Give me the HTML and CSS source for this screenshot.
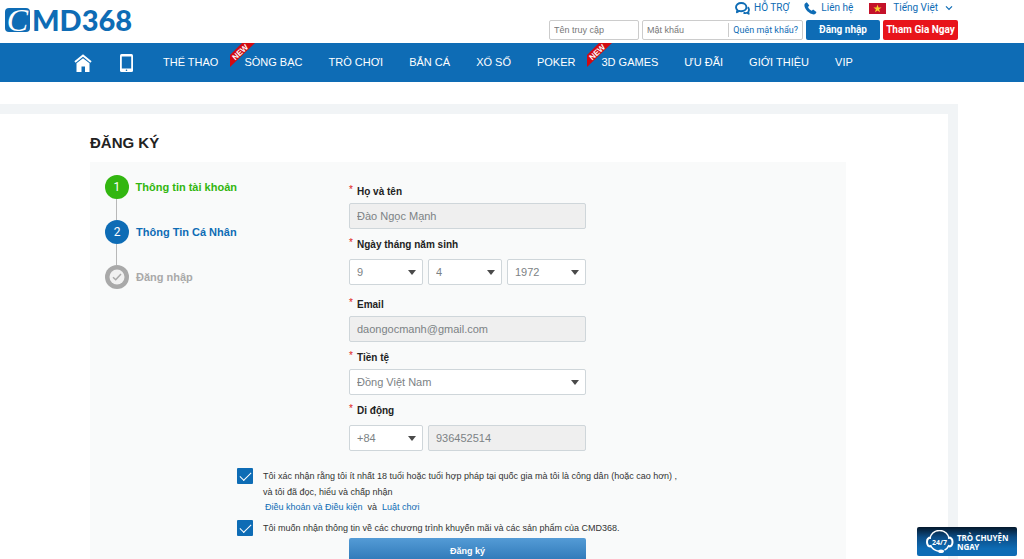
FILE: index.html
```html
<!DOCTYPE html>
<html lang="vi">
<head>
<meta charset="utf-8">
<meta name="viewport" content="width=device-width, initial-scale=1">
<title>CMD368 - Đăng ký</title>
<link rel="stylesheet" href="styles.css">
</head>
<body>
<header class="header">
  <a class="logo" href="#" aria-label="CMD368"><span class="logo-mark">C</span><span class="logo-name">MD368</span></a>
  <div class="header-tools">
    <div class="links">
      <a class="link link-support" href="#">
        <svg width="15" height="13" viewBox="0 0 15 13" aria-hidden="true"><path d="M8.500 10.600c1.200.6 2.600.6 3.400.2l1.800 1-.5-2c1.300-1.400.9-3.600-.6-4.400" fill="none" stroke="#0e6cb5" stroke-width="1.800" stroke-linejoin="round"/><path d="M6.200 1C3.200 1 1 2.900 1 5.200c0 1.100.5 2.100 1.400 2.800l-.5 2.300 2.300-1.400c.6.200 1.300.3 2 .3 3 0 5.200-1.800 5.200-4S9.200 1 6.200 1z" fill="#fff" stroke="#0e6cb5" stroke-width="1.900" stroke-linejoin="round"/></svg>
        HỖ TRỢ</a>
      <a class="link link-contact" href="#">
        <svg width="13" height="13" viewBox="0 0 13 13" aria-hidden="true"><path d="M1 1.600 2.800.300 5.300 3.500 4 4.900c.7 1.600 2 2.900 3.700 3.800l1.400-1.200 3.300 2.400c-.2 1.500-1.400 2.500-2.700 2.500C5.300 12 .400 7 .400 3.200c0-.6.200-1.200.6-1.600z" fill="#0e6cb5"/></svg>
        Liên hệ</a>
      <a class="link link-language" href="#">
        <svg width="17" height="11" viewBox="0 0 17 11" aria-hidden="true"><rect width="17" height="11" fill="#c4122a"/><path d="m8.500 1.500 1 2.900h3.100l-2.500 1.800.9 3-2.500-1.800L6 9.200l.9-3-2.500-1.800h3.100z" fill="#f3d02f"/></svg>
        Tiếng Việt
        <svg width="8" height="6" viewBox="0 0 8 6" aria-hidden="true"><path d="m1 1.300 3 3 3-3" fill="none" stroke="#0e6cb5" stroke-width="1.200"/></svg></a>
    </div>
    <form class="login">
      <input class="login-user" type="text" placeholder="Tên truy cập" aria-label="Tên truy cập">
      <div class="login-pass">
        <input type="password" placeholder="Mật khẩu" aria-label="Mật khẩu">
        <a href="#">Quên mật khẩu?</a>
      </div>
      <button class="btn btn-login" type="button">Đăng nhập</button>
      <button class="btn btn-join" type="button">Tham Gia Ngay</button>
    </form>
  </div>
</header>

<nav class="nav" aria-label="Menu chính">
  <a class="nav-home" href="#" aria-label="Trang chủ"><svg width="18" height="18" viewBox="0 0 18 18" aria-hidden="true"><path d="M1 8 9 1.500 17 8" fill="none" stroke="#fff" stroke-width="2"/><path d="M2.500 9.200 9 4.200l6.500 5V18H11v-5.500H7.500V18h-5z" fill="#fff"/></svg></a>
  <a class="nav-mobile" href="#" aria-label="Di động"><svg width="13" height="18" viewBox="0 0 13 18" aria-hidden="true"><rect width="13" height="18" rx="1.500" fill="#fff"/><path d="M1.800 2.500h9.400v12H1.800z" fill="#0e6cb5"/><circle cx="6.500" cy="16.300" r=".8" fill="#0e6cb5"/></svg></a>
  <a href="#">THỂ THAO</a>
  <a href="#"><svg class="ribbon" width="25" height="24" viewBox="0 0 25 24" aria-hidden="true"><path d="M12 0h13L0 24V12z" fill="#d20a11"/><text class="ribbon-text" transform="translate(10 9) rotate(-43)" text-anchor="middle" y="3">NEW</text></svg>SÒNG BẠC</a>
  <a href="#">TRÒ CHƠI</a>
  <a href="#">BẮN CÁ</a>
  <a href="#">XỔ SỐ</a>
  <a href="#">POKER</a>
  <a href="#"><svg class="ribbon" width="25" height="24" viewBox="0 0 25 24" aria-hidden="true"><path d="M12 0h13L0 24V12z" fill="#d20a11"/><text class="ribbon-text" transform="translate(10 9) rotate(-43)" text-anchor="middle" y="3">NEW</text></svg>3D GAMES</a>
  <a href="#">ƯU ĐÃI</a>
  <a href="#">GIỚI THIỆU</a>
  <a href="#">VIP</a>
</nav>

<main class="page">
  <h1 class="title">ĐĂNG KÝ</h1>
  <div class="panel">
    <ol class="steps">
      <li class="step step-done"><span class="step-dot"><span class="step-number">1</span></span>Thông tin tài khoản</li>
      <li class="step step-current"><span class="step-dot"><span class="step-number">2</span></span>Thông Tin Cá Nhân</li>
      <li class="step step-last"><span class="step-dot"><svg width="16" height="16" viewBox="0 0 16 16" aria-hidden="true"><circle cx="8" cy="8" r="7.500" fill="#f1f1f1"/><path d="m4 8.300 2.700 2.500L12 5" fill="none" stroke="#a9a9a9" stroke-width="1.500"/></svg></span>Đăng nhập</li>
    </ol>
    <form class="register">
      <div class="fields">
        <div class="field">
          <label for="name">Họ và tên</label>
          <input id="name" type="text" value="Đào Ngọc Mạnh" readonly>
        </div>
        <div class="field field-date">
          <label for="day">Ngày tháng năm sinh</label>
          <div class="row">
            <span class="select"><select id="day"><option>9</option></select></span>
            <span class="select"><select aria-label="Tháng"><option>4</option></select></span>
            <span class="select"><select aria-label="Năm"><option>1972</option></select></span>
          </div>
        </div>
        <div class="field">
          <label for="email">Email</label>
          <input id="email" type="email" value="daongocmanh@gmail.com" readonly>
        </div>
        <div class="field">
          <label for="currency">Tiền tệ</label>
          <span class="select"><select id="currency"><option>Đồng Việt Nam</option></select></span>
        </div>
        <div class="field field-phone">
          <label for="phone">Di động</label>
          <div class="row">
            <span class="select"><select aria-label="Mã quốc gia"><option>+84</option></select></span>
            <input id="phone" type="tel" value="936452514" readonly>
          </div>
        </div>
      </div>
      <div class="consents">
        <div class="consent">
          <input id="age" type="checkbox" checked>
          <div>
            <label for="age">Tôi xác nhận rằng tôi ít nhất 18 tuổi hoặc tuổi hợp pháp tại quốc gia mà tôi là công dân (hoặc cao hơn) ,<br>và tôi đã đọc, hiểu và chấp nhận</label>
            <p class="terms"><a href="#">Điều khoản và Điều kiện</a><span>và</span><a href="#">Luật chơi</a></p>
          </div>
        </div>
        <div class="consent">
          <input id="news" type="checkbox" checked>
          <label for="news">Tôi muốn nhận thông tin về các chương trình khuyến mãi và các sản phẩm của CMD368.</label>
        </div>
      </div>
      <button class="submit" type="button">Đăng ký</button>
    </form>
  </div>
</main>

<a class="chat" href="#">
  <svg width="29" height="24" viewBox="0 0 29 24" aria-hidden="true"><path d="M4 9a9.500 8.500 0 0 1 19 0M4.500 15c1.200 3 4 5.500 8 6.200M23 15c-1 2.500-2.600 4.200-4.500 5.200" fill="none" stroke="#fff" stroke-width="1.500"/><path d="M5 7.500C2.500 7.500 1 9.500 1 12s1.500 4.500 4 4.500M22.500 7.500c2.500 0 4 2 4 4.500s-1.500 4.500-4 4.500" fill="none" stroke="#fff" stroke-width="2"/><ellipse cx="15" cy="21.300" rx="3" ry="1.800" fill="#fff"/><text class="chat-hours" x="13.500" y="14.500" text-anchor="middle">24/7</text></svg>
  <span>TRÒ CHUYỆN<br>NGAY</span>
</a>
</body>
</html>
```
FILE: styles.css
```css
* { box-sizing: border-box; }

body {
  margin: 0;
  background: #fff;
  color: #333;
  font: 11px/16px "Liberation Sans", Arial, sans-serif;
  overflow-x: hidden;
}

a { color: #0e6cb5; text-decoration: none; }
button, input, select { font: inherit; margin: 0; }
button { cursor: pointer; }
svg { display: block; flex: none; }

/* Header */
.header {
  display: flex;
  justify-content: space-between;
  align-items: flex-start;
  padding: 0 66px 3px 5px;
}
.logo {
  display: flex;
  align-items: center;
  padding-top: 8px;
  gap: 2px;
}
.logo-mark {
  width: 25px;
  height: 24px;
  border-radius: 4px;
  background: #0e6cb5;
  color: #fff;
  font: italic 32px/24px "Liberation Serif", serif;
  text-align: center;
}
.logo-name { font: 900 29px/24px Lato, sans-serif; }
.header-tools {
  display: flex;
  flex-direction: column;
  align-items: flex-end;
  gap: 4px;
}
.links { display: flex; padding-right: 5px; }
.link {
  display: flex;
  align-items: center;
  gap: 4px;
  font: 10px/16px Roboto, sans-serif;
}
.link-contact { margin-left: 15px; }
.link-language { margin-left: 16px; gap: 7px; }
.login { display: flex; gap: 3px; }
.login input {
  min-width: 0;
  border: 0;
  padding: 0 4px;
  background: transparent;
  font-size: 9px;
}
.login input::placeholder { color: #777; opacity: 1; }
.login .login-user { width: 90px; border: 1px solid #ccc; border-radius: 2px; }
.login-pass {
  display: flex;
  align-items: center;
  width: 161px;
  border: 1px solid #ccc;
  border-radius: 2px;
}
.login-pass input { flex: 1; }
.login-pass a {
  padding: 0 4px;
  border-left: 1px solid #ccc;
  font: 9px/14px Roboto, sans-serif;
}
.btn {
  height: 20px;
  padding: 0;
  border: 0;
  border-radius: 2px;
  color: #fff;
  font: bold 10px/20px Roboto, sans-serif;
  white-space: nowrap;
}
.btn-login { width: 74px; background: #0e6cb5; }
.btn-join { width: 75px; background: #e8141b; }

/* Navigation */
.nav {
  display: flex;
  align-items: center;
  gap: 26px;
  padding-left: 74px;
  background: #0e6cb5;
}
.nav a {
  position: relative;
  color: #fff;
  line-height: 39px;
  white-space: nowrap;
}
.nav .nav-mobile { margin: 0 4px 0 2px; }
.ribbon { position: absolute; top: 0; left: -14px; }
.ribbon-text { fill: #fff; font: bold 8px "Liberation Sans", sans-serif; }

/* Registration */
.page {
  margin: 22px 66px 0 0;
  padding: 18px 102px 24px 90px;
  border: solid #f1f4f6;
  border-width: 10px 10px 0 0;
}
.title {
  margin: 0 0 9px;
  color: #222;
  font-size: 15px;
  line-height: 21px;
}
.panel {
  display: grid;
  grid-template-columns: 147px 1fr;
  background: #f9fafa;
}
.steps {
  margin: 0;
  padding: 13px 0 0 15px;
  list-style: none;
  font-weight: bold;
  white-space: nowrap;
}
.step {
  position: relative;
  display: flex;
  align-items: center;
  gap: 7px;
  height: 24px;
  margin-bottom: 21px;
}
.step:not(:last-child)::after {
  content: "";
  position: absolute;
  top: 24px;
  left: 11px;
  width: 1px;
  height: 21px;
  background: #b8b8b8;
}
.step-dot {
  display: flex;
  align-items: center;
  justify-content: center;
  width: 24px;
  height: 24px;
  border-radius: 50%;
  background: currentColor;
}
.step-number { color: #fff; font: 12px/24px Roboto, sans-serif; }
.step-done { color: #32b610; }
.step-current { color: #0e6cb5; }
.step-last { color: #a9a9a9; }

.register { padding-top: 19px; }
.fields { width: 237px; margin-left: 112px; }
.field { margin-bottom: 5px; }
.field label {
  display: block;
  color: #222;
  font-size: 10px;
  font-weight: bold;
  line-height: 22px;
}
.field label::before {
  content: "*";
  display: inline-block;
  width: 8px;
  color: #e02020;
  font-weight: normal;
  vertical-align: top;
  line-height: 18px;
}
.field-date { margin-bottom: 9px; }
.field-date label, .field-phone label { margin-bottom: 3px; }
.field input, .field select {
  width: 100%;
  height: 26px;
  padding: 0 7px;
  border: 1px solid #cfd6da;
  border-radius: 2px;
  background: #fff;
  color: #7c8285;
}
.field input { display: block; background: #efefef; }
.field select { appearance: none; display: block; }
.select { position: relative; display: block; }
.select::after {
  content: "";
  position: absolute;
  top: 11px;
  right: 7px;
  border: 4px solid transparent;
  border-top: 5px solid #4a4a4a;
  border-bottom: 0;
  pointer-events: none;
}
.row { display: grid; grid-template-columns: 74px 74px 1fr; gap: 5px; }
.row input { grid-column: span 2; }

.consents { padding-top: 12px; font-size: 9px; }
.consent { display: flex; gap: 10px; margin-bottom: 5px; }
.consent input {
  appearance: none;
  flex: none;
  width: 16px;
  height: 16px;
  border-radius: 1px;
  background: #0e6cb5;
}
.consent input:checked::after {
  content: "";
  display: block;
  width: 10px;
  height: 5px;
  margin: 4px 0 0 3px;
  border: solid #fff;
  border-width: 0 0 1px 1px;
  transform: rotate(-45deg);
}
.terms { display: flex; gap: 5px; margin: 0 0 0 2px; line-height: 15px; }
.submit {
  display: block;
  width: 237px;
  height: 26px;
  margin: -3px 0 0 112px;
  border: 0;
  border-radius: 2px;
  background: linear-gradient(#549bd6, #2a74b4);
  color: #fff;
  font-size: 9px;
  font-weight: bold;
}

/* Live chat */
.chat {
  position: fixed;
  right: 7px;
  bottom: 3px;
  display: flex;
  align-items: center;
  gap: 2px;
  width: 100px;
  height: 29px;
  padding-left: 9px;
  border-radius: 2px;
  background: linear-gradient(#04182c, #0c4c85 35%, #0e6cb5 75%);
  color: #fff;
  font: bold 8px/9px "Noto Sans", sans-serif;
  white-space: nowrap;
}
.chat-hours { fill: #fff; font: bold 7px "Noto Sans", sans-serif; }
```
